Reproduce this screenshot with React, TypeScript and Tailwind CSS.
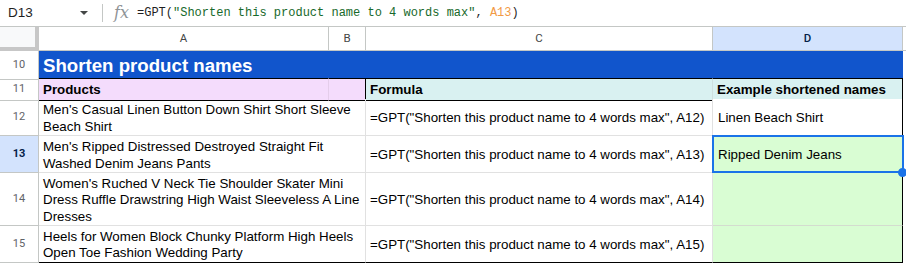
const rows = [
  {
    n: "12",
    h: "h-[37px]",
    name: "Men's Casual Linen Button Down Shirt Short Sleeve Beach Shirt",
    ref: "A12",
    out: "Linen Beach Shirt",
  },
  {
    n: "13",
    h: "h-[37px]",
    name: "Men's Ripped Distressed Destroyed Straight Fit Washed Denim Jeans Pants",
    ref: "A13",
    out: "Ripped Denim Jeans",
  },
  {
    n: "14",
    h: "h-[53px]",
    name: "Women's Ruched V Neck Tie Shoulder Skater Mini Dress Ruffle Drawstring High Waist Sleeveless A Line Dresses",
    ref: "A14",
    out: "",
  },
  {
    n: "15",
    h: "h-[36px]",
    name: "Heels for Women Block Chunky Platform High Heels Open Toe Fashion Wedding Party",
    ref: "A15",
    out: "",
  },
]

const cols = "grid grid-cols-[39px_290px_37px_347px_190px_3px]"

export default function App() {
  return (
    <div className="w-[906px] h-[264px] overflow-hidden bg-white font-['Liberation_Sans',Arial,sans-serif] text-black">
      {/* formula bar */}
      <div className="flex h-[27px] items-center border-b border-[#c4c7c5]">
        <div className="w-[72px] pl-[8px] text-[13.5px] text-[#1f1f1f]">D13</div>
        <svg width="10" height="6" viewBox="0 0 10 6" className="ml-[7px]">
          <path d="M1 1 L9 1 L5 5 Z" fill="#444746" />
        </svg>
        <div className="ml-[13px] h-[18px] w-px bg-[#c4c7c5]" />
        <div className="ml-[11px] w-[16px] font-['DejaVu_Serif',serif] italic text-[16px] leading-none text-[#8f9396]">
          fx
        </div>
        <div className="ml-[7px] font-['Liberation_Mono',monospace] text-[12px] whitespace-pre text-[#1f1f1f]">
          =GPT(
          <span className="text-[#17692b]">"Shorten this product name to 4 words max"</span>
          ,{" "}
          <span className="text-[#f29a45]">A13</span>)
        </div>
      </div>

      {/* column letters */}
      <div className={`${cols} h-[24px] text-[11.5px] font-['Roboto',Arial,sans-serif]`}>
        <div className="bg-[#f8f9fa] border-r-[4px] border-b-[4px] border-[#c7c7c7]" />
        <div className="flex items-center justify-center border-r border-b border-[#c4c7c5] text-[#444746]">A</div>
        <div className="flex items-center justify-center border-r border-b border-[#c4c7c5] text-[#444746]">B</div>
        <div className="flex items-center justify-center border-r border-b border-[#c4c7c5] text-[#444746]">C</div>
        <div className="flex items-center justify-center border-r border-b border-[#c4c7c5] bg-[#d3e3fd] text-[#041e49] font-medium">D</div>
        <div className="border-b border-[#c4c7c5]" />
      </div>

      {/* row 10 title */}
      <div className={`${cols} h-[27px]`}>
        <div className="flex items-center justify-center border-r border-b border-[#c4c7c5] text-[11px] text-[#5f6368] font-['Roboto',Arial,sans-serif]">10</div>
        <div className="col-span-4 flex items-center bg-[#1155cc] pl-[4px] pt-px text-[18.67px] font-bold text-white">
          Shorten product names
        </div>
        <div />
      </div>

      {/* row 11 headers */}
      <div className={`${cols} h-[21px] text-[13.33px] font-bold`}>
        <div className="flex items-center justify-center border-r border-b border-[#c4c7c5] text-[11px] font-normal text-[#5f6368] font-['Roboto',Arial,sans-serif]">11</div>
        <div className="flex items-center bg-[#f4dcfc] pl-[4px] pt-px border-t border-b border-black border-r border-r-[#e4cdea]">Products</div>
        <div className="bg-[#f4dcfc] border-t border-b border-r border-black" />
        <div className="flex items-center bg-[#d9f1f1] pl-[4px] pt-px border-t border-b border-black border-r border-r-[#cfe0e0]">Formula</div>
        <div className="flex items-center bg-[#d9f1f1] pl-[4px] pt-px border-t border-b border-r border-black">Example shortened names</div>
        <div />
      </div>

      {/* data rows */}
      {rows.map((r, i) => {
        const last = i === rows.length - 1
        const sel = r.n === "13"
        return (
          <div key={r.n} className={`${cols} ${r.h} text-[13.33px] leading-[16.3px]`}>
            <div
              className={`flex items-center justify-center border-r border-b border-[#c4c7c5] text-[11px] font-['Roboto',Arial,sans-serif] ${
                sel ? "bg-[#d3e3fd] text-[#041e49] font-bold" : "text-[#5f6368]"
              }`}
            >
              {r.n}
            </div>
            <div
              className={`col-span-2 flex items-center pl-[4px] pr-[3px] pt-[3px] border-r border-[#e1e1e1] ${
                last ? "border-b border-b-black" : "border-b"
              }`}
            >
              {r.name}
            </div>
            <div
              className={`flex items-center pl-[4px] pt-[3px] whitespace-nowrap border-r border-[#e1e1e1] ${
                last ? "border-b border-b-black" : "border-b"
              }`}
            >
              =GPT("Shorten this product name to 4 words max", {r.ref})
            </div>
            <div
              className={`relative flex items-center pl-[5px] pt-[3px] border-r border-r-black ${
                last ? "border-b border-b-black" : "border-b border-b-[#d4dccf]"
              } ${r.out && !sel ? "bg-white" : "bg-[#d9fdd3]"}`}
            >
              {r.out}
              {sel && (
                <>
                  <div className="absolute z-10 -left-px -top-px -right-[2px] -bottom-px border-2 border-[#1a73e8]" />
                  <div className="absolute z-20 -right-[5px] -bottom-[5px] w-[9px] h-[9px] rounded-full bg-[#1a73e8]" />
                </>
              )}
            </div>
            <div />
          </div>
        )
      })}
    </div>
  )
}
